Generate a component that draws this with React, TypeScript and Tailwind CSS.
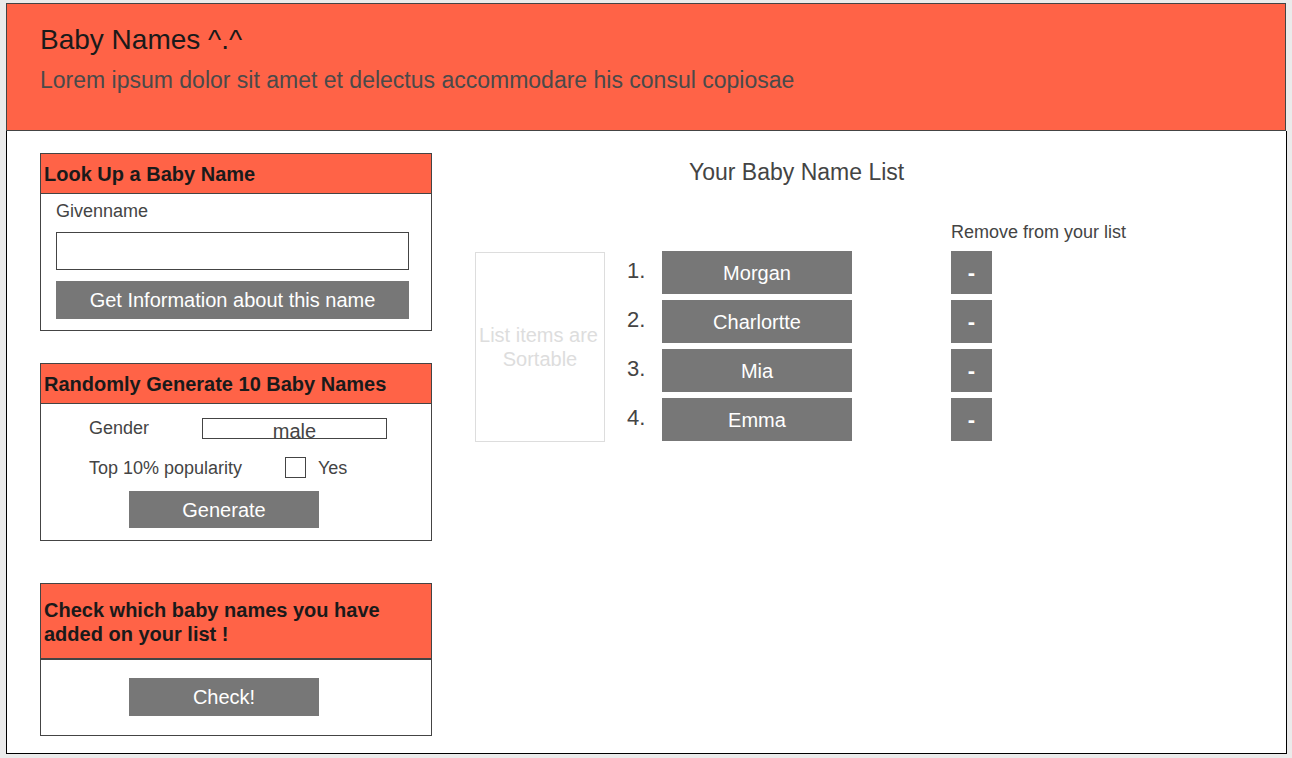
import React from 'react';

const names = ['Morgan', 'Charlortte', 'Mia', 'Emma'];

const PanelHeader: React.FC<{ children: React.ReactNode; tall?: boolean }> = ({ children, tall }) => (
  <div
    className={
      tall
        ? 'bg-[#ff6347] border-b-2 border-[#444] px-[3px] pt-[14px] pb-[12px] text-[20px] leading-[24px] font-bold text-[#1a1a1a]'
        : 'bg-[#ff6347] border-b border-[#444] h-[40px] px-[3px] flex items-center text-[20px] font-bold text-[#1a1a1a]'
    }
  >
    {children}
  </div>
);

const GrayButton: React.FC<{ className?: string; children: React.ReactNode }> = ({ className, children }) => (
  <button className={`bg-[#777] text-white flex items-center justify-center ${className ?? ''}`}>
    {children}
  </button>
);

export default function App() {
  return (
    <div className="min-h-screen bg-[#ebebeb] pl-[6px] pt-[3px] font-['Liberation_Sans',Arial,sans-serif]">
      {/* header */}
      <div className="w-[1280px] h-[128px] bg-[#ff6347] border border-[#444] pl-[33px] pt-[20px]">
        <h1 className="text-[28px] leading-[32px] text-[#1a1a1a]">Baby Names ^.^</h1>
        <p className="mt-[10px] text-[23px] leading-[28px] text-[#4a4a4a]">
          Lorem ipsum dolor sit amet et delectus accommodare his consul copiosae
        </p>
      </div>

      {/* body */}
      <div className="w-[1281px] h-[623px] bg-white border border-black border-t-0 pl-[33px] pt-[22px] flex">
        {/* left column */}
        <div className="w-[392px] flex flex-col">
          <div className="border border-[#444]">
            <PanelHeader>Look Up a Baby Name</PanelHeader>
            <div className="px-[15px] pt-[7px] pb-[11px]">
              <div className="text-[18px] leading-[20px] text-[#444]">Givenname</div>
              <input className="mt-[11px] w-[353px] h-[38px] border border-[#444] outline-none" />
              <GrayButton className="mt-[11px] w-[353px] h-[38px] text-[20px]">Get Information about this name</GrayButton>
            </div>
          </div>

          <div className="mt-[32px] border border-[#444]">
            <PanelHeader>Randomly Generate 10 Baby Names</PanelHeader>
            <div className="pl-[48px] pt-[14px] pb-[12px]">
              <div className="flex items-center h-[21px]">
                <span className="w-[113px] text-[18px] leading-[20px] text-[#444] -mt-[1px]">Gender</span>
                <div className="w-[185px] h-[21px] border border-[#444] text-center text-[20px] leading-[24px] text-[#444]">
                  male
                </div>
              </div>
              <div className="flex items-center h-[21px] mt-[18px]">
                <span className="w-[196px] text-[18px] leading-[20px] text-[#444]">Top 10% popularity</span>
                <span className="w-[21px] h-[21px] border border-[#444]" />
                <span className="ml-[12px] text-[18px] leading-[20px] text-[#444]">Yes</span>
              </div>
              <GrayButton className="mt-[13px] ml-[40px] w-[190px] h-[37px] text-[20px]">Generate</GrayButton>
            </div>
          </div>

          <div className="mt-[42px] border border-[#444]">
            <PanelHeader tall>Check which baby names you have added on your list !</PanelHeader>
            <div className="pl-[88px] pt-[18px] pb-[19px]">
              <GrayButton className="w-[190px] h-[38px] text-[20px]">Check!</GrayButton>
            </div>
          </div>
        </div>

        {/* right area */}
        <div className="ml-[43px] pt-[6px] flex flex-col">
          <h2 className="pl-[214px] text-[23px] leading-[26px] text-[#444]">Your Baby Name List</h2>
          <div className="flex items-start mt-[37px]">
            <div className="mt-[30px] w-[130px] h-[190px] border border-[#ddd] flex items-center justify-center text-center text-[20px] leading-[24px] text-[#ddd] -indent-[3px]">
              List items are
              <br />
              Sortable
            </div>
            <div className="ml-[22px] mt-[29px] flex flex-col gap-[6px]">
              {names.map((name, i) => (
                <div key={name} className="flex h-[43px]">
                  <span className="w-[35px] text-[22px] leading-[40px] text-[#444]">{i + 1}.</span>
                  <GrayButton className="w-[190px] h-[43px] text-[20px]">{name}</GrayButton>
                </div>
              ))}
            </div>
            <div className="ml-[99px] flex flex-col">
              <div className="h-[20px] leading-[20px] text-[18px] text-[#444] mb-[9px]">Remove from your list</div>
              <div className="flex flex-col gap-[6px]">
                {names.map((name) => (
                  <GrayButton key={name} className="w-[41px] h-[43px] font-bold text-[22px]">
                    -
                  </GrayButton>
                ))}
              </div>
            </div>
          </div>
        </div>
      </div>
    </div>
  );
}
